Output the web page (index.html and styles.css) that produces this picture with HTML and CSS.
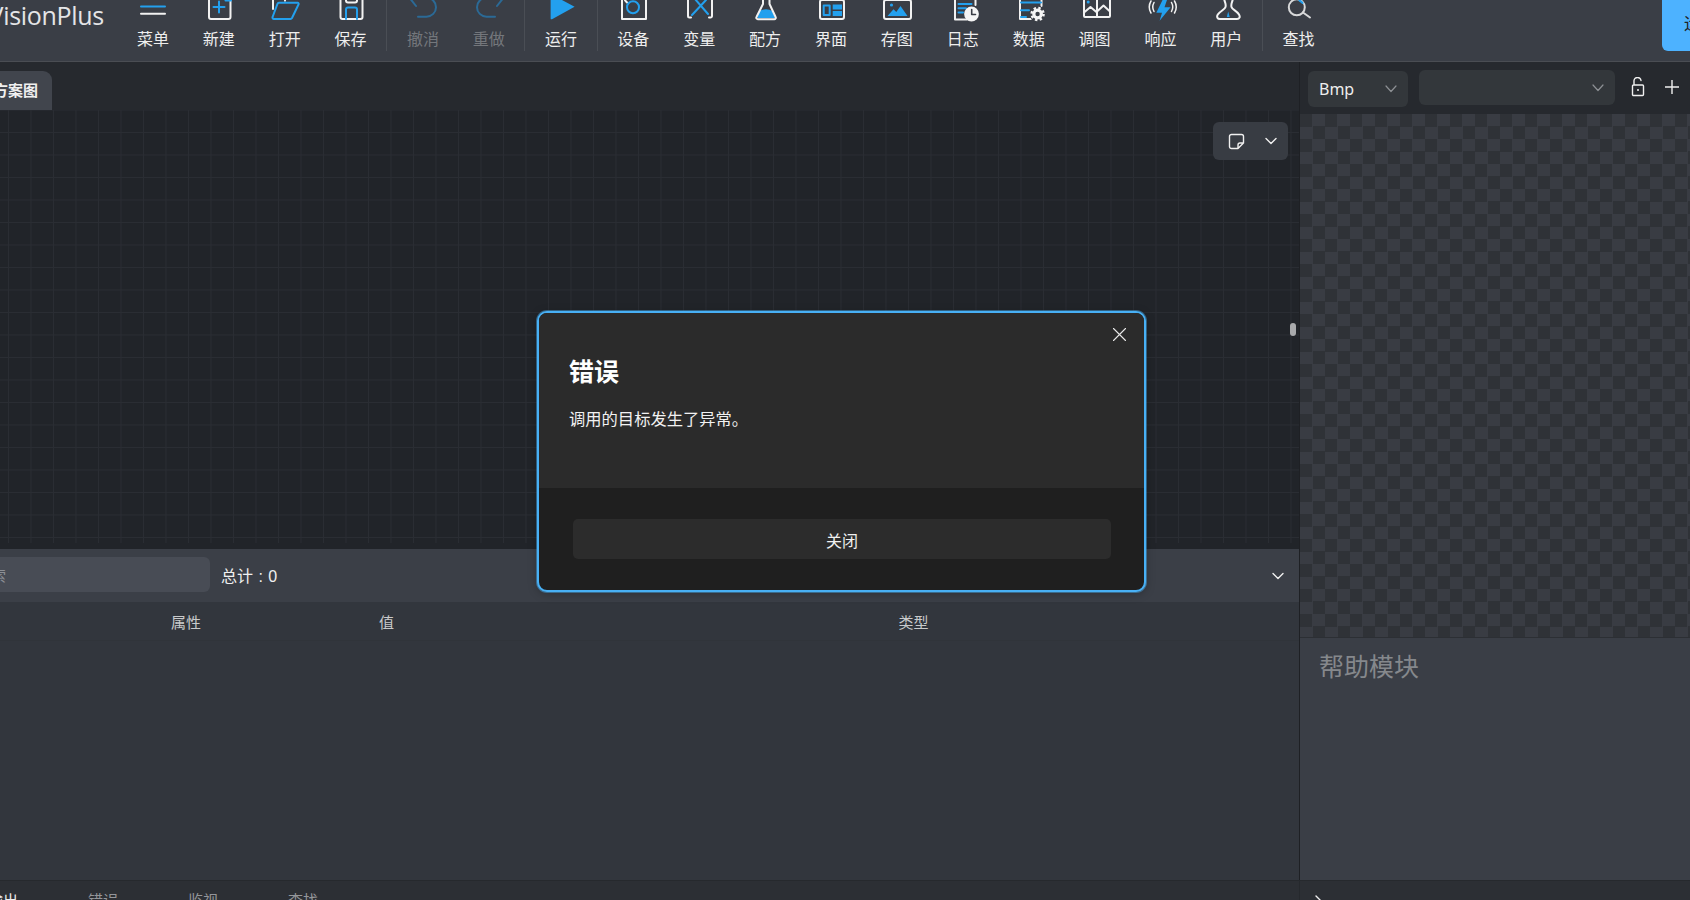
FILE: index.html
```html
<!DOCTYPE html>
<html lang="zh-CN">
<head>
    <meta charset="UTF-8">
    <title>VisionPlus</title>
    <link rel="stylesheet" href="styles.css">
</head>
<body>

<div class="app">
    <!-- toolbar -->
    <div class="toolbar">
        <div class="logo"><span>VisionPlus</span></div>

        <div class="tool"><svg viewBox="0 0 30 20"><path class="bl" d="M3 6.6H27"/><path class="wh" d="M3 13.7H27"/></svg><span>菜单</span></div>
        <div class="tool"><svg viewBox="0 0 30 20"><path class="wh" d="M5 -2V17a2 2 0 0 0 2 2H24.5a2 2 0 0 0 2-2V-2"/><path class="bl" d="M9.5 7H20.5M15 1.5V12.5M21.5 .5H27"/></svg><span>新建</span></div>
        <div class="tool"><svg viewBox="0 0 30 20"><path class="wh" d="M3 9V-2M15 .8V-2"/><path class="bl" d="M9 2.8H27.6a1 1 0 0 1 1 1.4L22 18a2 2 0 0 1-1.6 1H4a1.4 1.4 0 0 1-1.4-2L7.4 4A2 2 0 0 1 9 2.8Z"/></svg><span>打开</span></div>
        <div class="tool"><svg viewBox="0 0 30 20"><path class="wh" d="M4.5 -2V17a2 2 0 0 0 2 2H24.5a2 2 0 0 0 2-2V-2M10 -2V.5a2 2 0 0 0 2 2H19a2 2 0 0 0 2-2V-2"/><path class="bl" d="M10 19V9.5a2 2 0 0 1 2-2H19a2 2 0 0 1 2 2V19"/></svg><span>保存</span></div>
        <div class="sep"></div>
        <div class="tool off"><svg viewBox="0 0 30 20"><path class="dim" d="M2.500 -1L8 6M10 16.700H18.500a9.500 9.500 0 0 0 0-19H10"/></svg><span>撤消</span></div>
        <div class="tool off"><svg viewBox="0 0 30 20"><path class="dim" d="M28.500 -1L23 6M21 16.700H12.500a9.500 9.500 0 0 1 0-19H21"/></svg><span>重做</span></div>
        <div class="sep"></div>
        <div class="tool"><svg viewBox="0 0 30 20"><path class="fill" d="M4.6 -6L28.6 6.7 6 19.2a1 1 0 0 1-1.4-.8Z"/></svg><span>运行</span></div>
        <div class="sep"></div>
        <div class="tool"><svg viewBox="0 0 30 20"><path class="wh" d="M4 -2V19H28V-2M7 .3L9 2.5"/><circle class="bl" cx="15" cy="7.3" r="6"/></svg><span>设备</span></div>
        <div class="tool"><svg viewBox="0 0 30 20"><path class="wh" d="M4 -2V16a1.5 1.5 0 0 0 1.5 1.5H7M28 -2V16a1.5 1.5 0 0 1-1.5 1.5H25"/><path class="bl" d="M8 15L22 0M11 -1L24 14"/></svg><span>变量</span></div>
        <div class="tool"><svg viewBox="0 0 30 20"><path class="fill" d="M9.5 11Q16 7.5 22.5 11L25 18H7.5Z"/><path class="wh" d="M13 -2V4L6.5 17a1.5 1.5 0 0 0 1.4 2.2H24.3a1.5 1.5 0 0 0 1.3-2.2L19.5 4V-2"/></svg><span>配方</span></div>
        <div class="tool"><svg viewBox="0 0 30 20"><rect class="wh" x="4" y="0" width="24" height="19" rx="2"/><rect class="bl" x="7.7" y="5.5" width="6" height="9.5"/><path class="fill" d="M16.7 4.5H26V9.5H16.7ZM16.7 11H26V16H16.7Z"/></svg><span>界面</span></div>
        <div class="tool"><svg viewBox="0 0 30 20"><rect class="wh" x="2" y="0" width="27" height="19" rx="2"/><circle class="fill" cx="9.500" cy="5" r="1.6"/><path class="fill" d="M5.5 16L11.5 9.3 14.3 12 18.5 6 25.5 16Z"/></svg><span>存图</span></div>
        <div class="tool"><svg viewBox="0 0 30 20"><path class="wh" d="M7 -2V19.5H19M27.5 -2V5"/><path class="bl" d="M10.5 4H23.5M10.5 8.3H18M10.5 12.5H15"/><circle class="solid" cx="23.5" cy="14" r="7.4"/><path class="hand" d="M23.7 9.5V14.5H27.5"/></svg><span>日志</span></div>
        <div class="tool"><svg viewBox="0 0 30 20"><path class="wh" d="M6 -2V19H17M27.5 -2V6"/><path class="bl" d="M7 2.6H27M7 10.2H15M7 17H12"/><circle class="bg-dot" cx="23.6" cy="14" r="8"/><circle class="gear-teeth" cx="23.600" cy="14" r="6"/><circle class="gear" cx="23.600" cy="14" r="3.800"/></svg><span>数据</span></div>
        <div class="tool"><svg viewBox="0 0 30 20"><rect class="wh" x="4" y="-3" width="26" height="20" rx="1"/><path class="wh" d="M17 -3V17M4 12.5L10.5 7 17 12.5M17 11.5L23.5 5.5 30 11.5"/><circle class="fill" cx="8.2" cy="2" r="1.5"/></svg><span>调图</span></div>
        <div class="tool"><svg viewBox="0 0 30 20"><path class="wh thin" d="M6 1Q2.500 7 6 13M9 2.500Q6.500 7 9 11.500M29.500 1Q33 7 29.500 13M26.500 2.500Q29 7 26.500 11.500"/><path class="fill" d="M19 -3L11.300 12.700H17L14.600 20.700 25.600 7.300H19.500L23 -3Z"/></svg><span>响应</span></div>
        <div class="tool"><svg viewBox="0 0 30 20"><path class="wh" d="M13 -3C13 2 15.500 3 14.500 7C14 9.500 9 11 6.800 14.500C5.300 17 6.500 19 9 19H26C28.500 19 29.500 17 28 14.500C26 11 21 9.500 20.500 7C19.500 3 22 2 22 -3"/><path class="fill" d="M17.200 11.500L18.700 17H15.800Z"/></svg><span>用户</span></div>
        <div class="sep"></div>
        <div class="tool"><svg viewBox="0 0 30 20"><circle class="gr" cx="12.800" cy="7.300" r="8"/><path class="gr" d="M19 12.500L26 17.500"/><path class="bl" d="M15.500 .5A8 8 0 0 1 18.500 3"/></svg><span>查找</span></div>

        <div class="top-btn">运行</div>
    </div>

    <div class="main">
        <!-- 左侧 -->
        <div class="left">
            <div class="tabs"><div class="tab">方案图</div></div>
            <div class="canvas">
                <div class="note-btn">
                    <svg width="17" height="17" viewBox="0 0 17 17"><path d="M3.500 1.500H13.500A2 2 0 0 1 15.500 3.500V10L10 15.500H3.500A2 2 0 0 1 1.500 13.500V3.500A2 2 0 0 1 3.500 1.500ZM15.500 10H12A2 2 0 0 0 10 12V15.500"/></svg>
                    <svg width="12" height="8" viewBox="0 0 12 8"><path d="M1 1.500L6 6.500 11 1.500"/></svg>
                </div>
                <div class="thumb"></div>
            </div>
            <div class="panel-head">
                <input class="search" type="text" placeholder="搜索">
                <span class="total">总计 : 0</span>
                <svg class="fold" width="12" height="8" viewBox="0 0 12 8"><path d="M1 1.500L6 6.500 11 1.500"/></svg>
            </div>
            <div class="table-head">
                <div class="th-name">属性</div>
                <div class="th-value">值</div>
                <div class="th-type">类型</div>
            </div>
            <div class="table-body"></div>
        </div>

        <!-- 右侧 -->
        <div class="right">
            <div class="img-bar">
                <div class="select s1"><span>Bmp</span><svg width="12" height="8" viewBox="0 0 12 8"><path d="M1 1L6 6.500 11 1"/></svg></div>
                <div class="select s2"><span></span><svg width="12" height="8" viewBox="0 0 12 8"><path d="M1 1L6 6.500 11 1"/></svg></div>
                <svg class="lock" width="14" height="20" viewBox="0 0 14 20"><path d="M3 8V4.500A3.500 3.500 0 0 1 10 3.500M2.500 8H11.500A1 1 0 0 1 12.500 9V17.500A1 1 0 0 1 11.500 18.500H2.500A1 1 0 0 1 1.500 17.500V9A1 1 0 0 1 2.500 8Z"/><circle cx="7" cy="13" r="1"/></svg>
                <svg class="plus" width="14" height="14" viewBox="0 0 14 14"><path d="M7 0V14M0 7H14"/></svg>
            </div>
            <div class="checker"></div>
            <div class="help">帮助模块</div>
        </div>
    </div>

    <!-- 底部标签 -->
    <div class="bottom">
        <div class="bottom-tabs">
            <div class="btab on">输出</div>
            <div class="btab">错误</div>
            <div class="btab">监视</div>
            <div class="btab">查找</div>
        </div>
        <div class="bottom-right"><svg width="8" height="12" viewBox="0 0 8 12"><path d="M1 1L6 6 1 11"/></svg></div>
    </div>

    <!-- 错误对话框 -->
    <div class="dialog">
        <div class="dialog-top">
            <svg class="dialog-x" width="13" height="13" viewBox="0 0 13 13"><path d="M.500 .500L12.500 12.500M12.500 .500L.500 12.500"/></svg>
            <h2>错误</h2>
            <p>调用的目标发生了异常。</p>
        </div>
        <div class="dialog-foot">
            <div class="dialog-btn">关闭</div>
        </div>
    </div>
</div>

</body>
</html>
```

FILE: styles.css
```css
html, body { margin: 0; padding: 0; height: 100%; overflow: hidden; background: #26292e; }
body { font-family: "Noto Sans", "Noto Sans CJK SC", sans-serif; color: #eee; font-size: 15px; }
.app { position: relative; width: 1690px; height: 900px; display: flex; flex-direction: column; overflow: hidden; }

/* toolbar */
.toolbar { flex: 0 0 62px; box-sizing: border-box; display: flex; background: #3a3e46; border-bottom: 1px solid #4a4d53; }
.logo { flex: 0 0 120px; height: 29px; display: flex; justify-content: flex-end; align-items: center; overflow: hidden; padding-right: 16px; box-sizing: border-box; font-family: "Open Sans", sans-serif; font-size: 25px; font-weight: 500; color: #e4e5e7; letter-spacing: -.3px; }
.logo span { flex: none; }
.tool { flex: 0 0 65.9px; display: flex; flex-direction: column; align-items: center; font-size: 16px; line-height: 22px; color: #eee; font-family: "Noto Sans CJK SC", sans-serif; }
.tool svg { display: block; width: 30px; height: 20px; overflow: visible; margin-bottom: 7px; }
.tool.off { color: #74777c; }
.sep { flex: 0 0 1px; height: 51px; margin: 0 2.7px; background: #4a4e55; }
.wh, .bl, .dim, .gr, .hand { fill: none; stroke-width: 2; stroke-linecap: round; stroke-linejoin: round; }
.wh { stroke: #f2f2f2; }
.thin { stroke-width: 1.5; }
.bl { stroke: #23a0ee; }
.dim { stroke: #2b6a96; }
.gr { stroke: #d8d9da; }
.fill { fill: #23a0ee; }
.solid { fill: #f5f5f5; }
.hand { stroke: #3a3e46; stroke-width: 1.6; }
.gear { fill: none; stroke: #f5f5f5; stroke-width: 3.2; }
.gear-teeth { fill: none; stroke: #f5f5f5; stroke-width: 2.4; stroke-dasharray: 2.4 2.31; }
.bg-dot { fill: #3a3e46; }
.top-btn { flex: 0 0 28px; box-sizing: border-box; height: 51px; margin-left: auto; padding: 11px 0 0 22px; overflow: hidden; white-space: nowrap; background: #4db2ff; border-bottom-left-radius: 6px; color: #1f2226; font-size: 17px; line-height: 24px; font-family: "Noto Sans CJK SC", sans-serif; }

.main { flex: 1; display: flex; min-height: 0; }
.left { flex: 0 0 1300px; box-sizing: border-box; display: flex; flex-direction: column; border-right: 1px solid #1e2024; }

.tabs { flex: 0 0 48px; box-sizing: border-box; padding-top: 9px; background: #26292e; }
.tab { width: 52px; height: 39px; box-sizing: border-box; padding-right: 14px; text-align: right; overflow: hidden; white-space: nowrap; direction: rtl; background: #41454d; border-top-right-radius: 9px; font-family: "Noto Sans CJK SC", sans-serif; font-size: 15px; font-weight: 700; line-height: 37px; color: #f0f0f0; }

.canvas { position: relative; flex: 0 0 439px; box-sizing: border-box; border-bottom: 6px solid #212429; background-color: #212429; background-clip: padding-box;
  background-image: linear-gradient(#2a2d33 1px, transparent 1px), linear-gradient(90deg, #2a2d33 1px, transparent 1px);
  background-size: 22.5px 22.5px; background-position: 8px 22px; }
.note-btn { position: absolute; top: 12px; right: 11px; width: 75px; height: 38px; box-sizing: border-box; display: flex; align-items: center; justify-content: space-between; padding: 0 11px 0 15px; background: #383c43; border-radius: 6px; }
.note-btn svg, .fold, .select svg, .lock, .plus, .dialog-x, .bottom-right svg { fill: none; stroke: #f0f0f0; stroke-width: 1.4; stroke-linecap: round; stroke-linejoin: round; }
.lock circle { fill: #f0f0f0; stroke: none; }
.thumb { position: absolute; top: 213px; right: 3px; width: 6px; height: 13px; background: #a9aaac; border-radius: 4px; }

.panel-head { flex: 0 0 53px; display: flex; align-items: center; background: #3b3f47; }
.search { width: 240px; height: 35px; box-sizing: border-box; margin: -2px 12px 0 -30px; padding: 0 0 0 6px; border: none; outline: none; background: #484c55; border-radius: 6px; font-family: "Noto Sans CJK SC", sans-serif; font-size: 15px; color: #eee; }
.search::placeholder { color: #8d9096; }
.total { font-family: "Liberation Sans", "Noto Sans CJK SC", sans-serif; font-size: 16px; word-spacing: 1px; color: #f0f0f0; margin-top: -1px; margin-left: -1px; }
.fold { margin-left: auto; margin-right: 15px; }

.table-head { flex: 0 0 39px; box-sizing: border-box; display: grid; grid-template-columns: 301px 170px 1fr; align-items: center; background: #32363d; border-bottom: 1px solid #30343a; text-align: center; font-family: "Noto Sans CJK SC", sans-serif; font-size: 15px; color: #c9cacb; }
.th-name { padding-left: 71px; }
.th-value { padding-left: 1px; }
.th-type { padding-left: 57px; }
.table-body { flex: 1; background: #32363d; }

/* right column */
.right { flex: 1; display: flex; flex-direction: column; min-width: 0; }
.img-bar { flex: 0 0 52px; box-sizing: border-box; display: flex; align-items: center; padding: 0 11px 0 8px; background: #26292e; }
.select { box-sizing: border-box; display: flex; align-items: center; justify-content: space-between; background: #33373b; border-radius: 6px; font-size: 16px; color: #eee; }
.select svg { stroke: #8d9094; stroke-width: 1.2; }
.s1 { width: 100px; height: 36px; padding: 0 11px 0 11px; margin: 1px 11px 0 0; }
.s2 { width: 196px; height: 35px; padding: 0 11px; margin: -1px 16px 0 0; }
.lock { margin-right: 20px; margin-top: -2px; }
.plus { margin-top: -2px; }
.checker { flex: 0 0 524px; box-sizing: border-box; background: conic-gradient(#393c43 25%, #2f3237 0 50%, #393c43 0 75%, #2f3237 0) 0 0 / 25px 25px; border-bottom: 1px solid #2c2f34; }
.help { flex: 1; padding: 9px 0 0 19px; background: #3a3e46; font-family: "Noto Sans CJK SC", sans-serif; font-size: 25px; line-height: 36px; color: #85888c; }

/* bottom */
.bottom { flex: 0 0 20px; display: flex; overflow: hidden; background: #2c2f34; border-top: 1px solid #26292d; box-sizing: border-box; }
.bottom-tabs { flex: 0 0 1347px; box-sizing: border-box; display: flex; margin-left: -47px; border-right: 1px solid #26292d; font-family: "Noto Sans CJK SC", sans-serif; font-size: 15px; line-height: 22px; color: #94969a; }
.btab { flex: 0 0 100px; text-align: center; padding-top: 8px; }
.btab.on { color: #eee; }
.bottom-right { flex: 1; padding: 14px 0 0 15px; }
.bottom-right svg { display: block; }

/* dialog */
.dialog { position: absolute; left: 537px; top: 311px; width: 609px; height: 281px; box-sizing: border-box; display: flex; flex-direction: column; overflow: hidden; border: 2px solid #48b0f5; border-radius: 10px; background: #1f1f1f; box-shadow: 0 0 0 1px rgba(72,176,245,.45), 0 2px 10px rgba(0,0,0,.25); font-family: "Noto Sans CJK SC", sans-serif; }
.dialog-top { position: relative; flex: 0 0 175px; box-sizing: border-box; padding: 42px 30px 0; background: #2b2b2b; }
.dialog-x { position: absolute; top: 15px; right: 18px; stroke: #e8e8e8; stroke-width: 1.1; }
.dialog h2 { margin: -3px 0 0; font-size: 25px; line-height: 36px; font-weight: 700; color: #fff; }
.dialog p { margin: 18px 0 0; font-size: 16.3px; line-height: 24px; color: #f2f2f2; }
.dialog-foot { flex: 1; padding: 31px 33px 0 34px; }
.dialog-btn { height: 40px; box-sizing: border-box; background: #2c2c2c; border-radius: 5px; text-align: center; font-size: 16px; line-height: 42px; color: #f0f0f0; }
```
